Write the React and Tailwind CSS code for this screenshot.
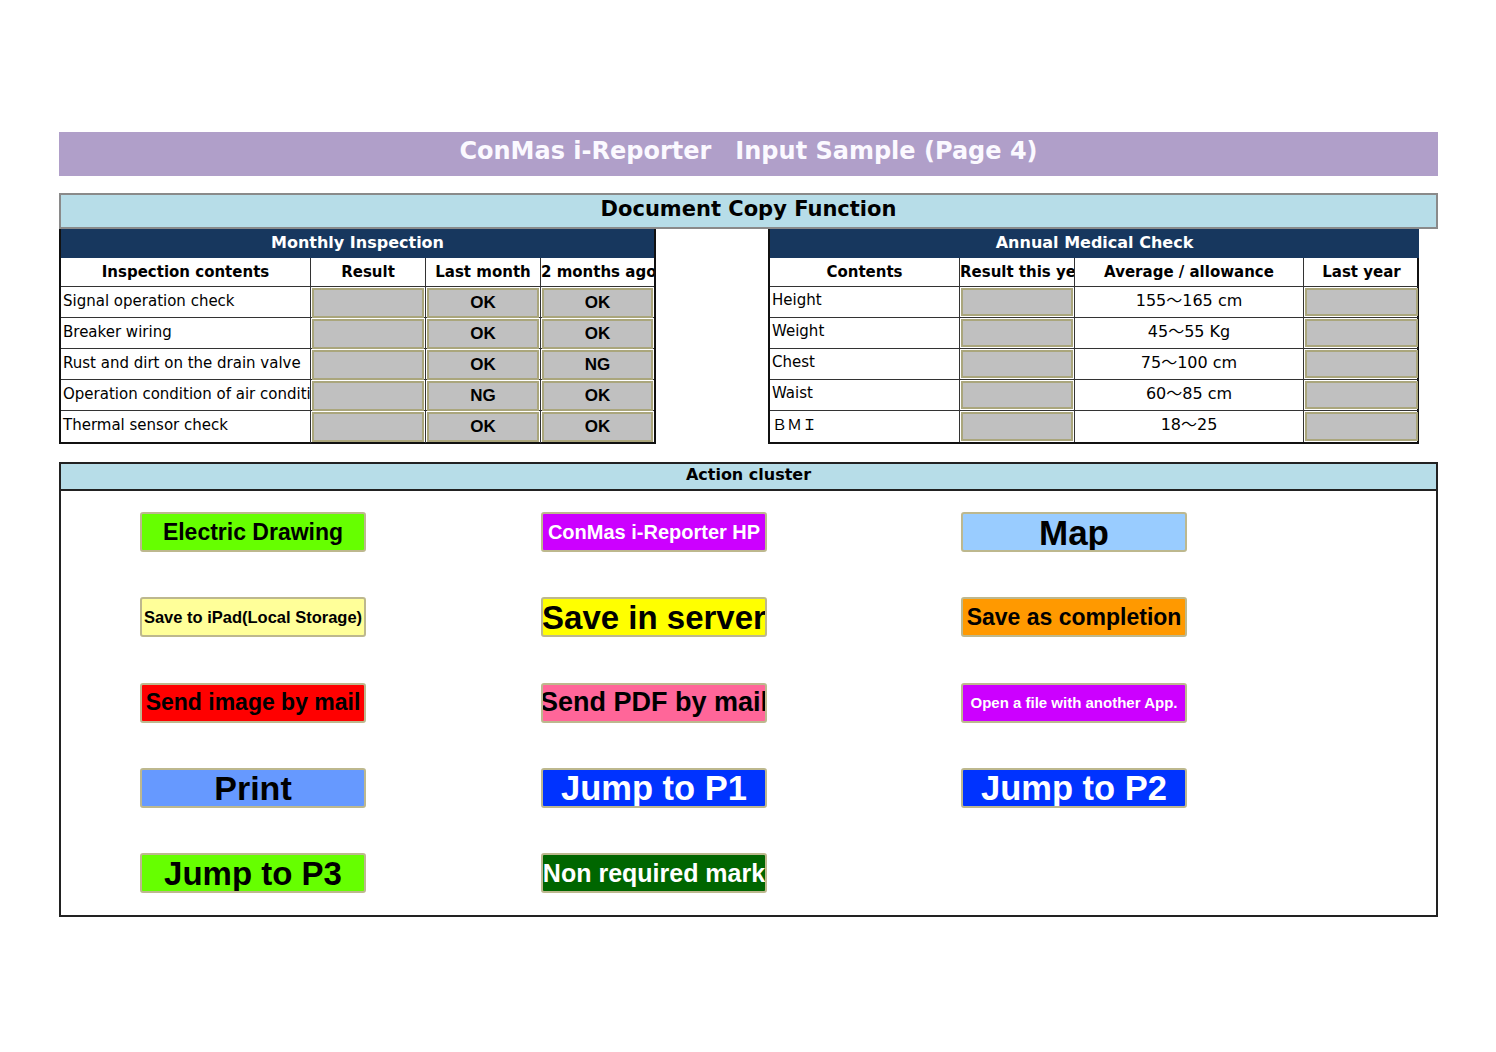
import React from 'react';

const verdana = { fontFamily: '"DejaVu Sans", Verdana, "Noto Sans CJK JP", sans-serif' };
const arial = { fontFamily: '"Liberation Sans", Arial, sans-serif' };

const monthlyRows = [
  ['Signal operation check', 'OK', 'OK'],
  ['Breaker wiring', 'OK', 'OK'],
  ['Rust and dirt on the drain valve', 'OK', 'NG'],
  ['Operation condition of air conditioner', 'NG', 'OK'],
  ['Thermal sensor check', 'OK', 'OK'],
];

const medicalRows = [
  ['Height', '155～165 cm'],
  ['Weight', '45～55 Kg'],
  ['Chest', '75～100 cm'],
  ['Waist', '60～85 cm'],
  ['ＢＭＩ', '18～25'],
];

// buttons in reading order, three per row
const actions = [
  { label: 'Electric Drawing', cls: 'bg-[#66ff00] text-black text-[23px]' },
  { label: 'ConMas i-Reporter HP', cls: 'bg-[#cc00ff] text-white text-[20px]' },
  { label: 'Map', cls: 'bg-[#99ccff] text-black text-[35px]' },
  { label: 'Save to iPad(Local Storage)', cls: 'bg-[#ffff99] text-black text-[16.5px]' },
  { label: 'Save in server', cls: 'bg-[#ffff00] text-black text-[33px]' },
  { label: 'Save as completion', cls: 'bg-[#ff9900] text-black text-[23px]' },
  { label: 'Send image by mail', cls: 'bg-[#ff0000] text-black text-[23px]' },
  { label: 'Send PDF by mail', cls: 'bg-[#ff6699] text-black text-[27px]' },
  { label: 'Open a file with another App.', cls: 'bg-[#cc00ff] text-white text-[15px]' },
  { label: 'Print', cls: 'bg-[#6699ff] text-black text-[34px]' },
  { label: 'Jump to P1', cls: 'bg-[#0033ff] text-white text-[34.5px]' },
  { label: 'Jump to P2', cls: 'bg-[#0033ff] text-white text-[34.5px]' },
  { label: 'Jump to P3', cls: 'bg-[#66ff00] text-black text-[33px]' },
  { label: 'Non required mark', cls: 'bg-[#006600] text-white text-[25px]' },
];

function GrayCell({ text }) {
  return (
    <div className="h-full border-r border-[#333] flex">
      <div className="flex-1 m-px border-2 border-[#aaa67c] bg-[#c0c0c0] flex items-center justify-center font-bold text-[17px] text-black" style={arial}>
        {text}
      </div>
    </div>
  );
}

function HeadCell({ children, last, left }) {
  return (
    <div className={`h-full overflow-hidden whitespace-nowrap flex items-center font-bold text-[15px] ${left ? 'justify-start' : 'justify-center'} ${last ? '' : 'border-r border-[#333]'}`}>
      {children}
    </div>
  );
}

function MonthlyTable() {
  return (
    <div className="w-[597px] border-2 border-[#111] border-t-0" style={verdana}>
      <div className="h-[29px] bg-[#17375e] text-white font-bold text-[16px] flex items-center justify-center pb-[2px]">Monthly Inspection</div>
      <div className="grid grid-cols-[250px_115px_115px_113px] h-[29px] border-b border-[#333] bg-white">
        <HeadCell>Inspection contents</HeadCell>
        <HeadCell>Result</HeadCell>
        <HeadCell>Last month</HeadCell>
        <HeadCell last left>2 months ago</HeadCell>
      </div>
      {monthlyRows.map((r, i) => (
        <div key={i} className={`grid grid-cols-[250px_115px_115px_113px] h-[31px] ${i < 4 ? 'border-b border-[#333]' : ''}`}>
          <div className="h-full border-r border-[#333] overflow-hidden whitespace-nowrap pl-[2px] pb-[3px] flex items-center text-[15px]">{r[0]}</div>
          <GrayCell />
          <GrayCell text={r[1]} />
          <div className="h-full flex">
            <div className="flex-1 m-px border-2 border-[#aaa67c] bg-[#c0c0c0] flex items-center justify-center font-bold text-[17px]" style={arial}>{r[2]}</div>
          </div>
        </div>
      ))}
    </div>
  );
}

function MedicalTable() {
  return (
    <div className="w-[651px] border-2 border-[#111] border-t-0 border-r-0" style={verdana}>
      <div className="h-[29px] bg-[#17375e] text-white font-bold text-[16px] flex items-center justify-center pb-[2px]">Annual Medical Check</div>
      <div className="grid grid-cols-[190px_115px_229px_115px] h-[29px] border-b border-[#333] border-r-2 border-r-[#111] bg-white">
        <HeadCell>Contents</HeadCell>
        <HeadCell left>Result this year</HeadCell>
        <HeadCell>Average / allowance</HeadCell>
        <HeadCell last>Last year</HeadCell>
      </div>
      {medicalRows.map((r, i) => (
        <div key={i} className={`grid grid-cols-[190px_115px_229px_115px] h-[31px] border-r-2 border-r-[#111] ${i < 4 ? 'border-b border-[#333]' : ''}`}>
          <div className="h-full border-r border-[#333] pl-[2px] pb-[3px] flex items-center text-[15px]">{r[0]}</div>
          <GrayCell />
          <div className="h-full border-r border-[#333] pb-[3px] flex items-center justify-center text-[16px]">{r[1]}</div>
          <div className="h-full flex">
            <div className="flex-1 m-px border-2 border-[#aaa67c] bg-[#c0c0c0]" />
          </div>
        </div>
      ))}
    </div>
  );
}

export default function App() {
  return (
    <div className="min-h-screen bg-white pt-[132px] pl-[59px]">
      <div className="w-[1379px]">
        <div className="h-[44px] bg-[#b09fc9] flex items-center justify-center pb-[6px] text-[#fbf9ff] font-bold text-[24px]" style={verdana}>
          ConMas i-Reporter　Input Sample (Page 4)
        </div>

        <div className="mt-[17px] h-[36px] bg-[#b7dde8] border-2 border-[#8a8a8a] flex items-center justify-center pb-[2px] font-bold text-[21px] text-black" style={verdana}>
          Document Copy Function
        </div>

        <div className="flex">
          <MonthlyTable />
          <div className="w-[112px]" />
          <MedicalTable />
        </div>

        <div className="mt-[18px] border-2 border-[#222]">
          <div className="h-[27px] bg-[#b7dde8] border-b-2 border-[#222] flex items-center justify-center pb-[3px] font-bold text-[16px]" style={verdana}>
            Action cluster
          </div>
          <div className="grid grid-cols-[401px_420px_226px] gap-y-[45.3px] pl-[79px] pt-[21px] pb-[22px]">
            {actions.map((a) => (
              <div
                key={a.label}
                className={`w-[226px] h-[40px] border-2 border-[#bdb88e] rounded-[3px] flex items-center justify-center font-bold whitespace-nowrap overflow-hidden leading-none ${a.cls}`}
                style={arial}
              >
                {a.label}
              </div>
            ))}
          </div>
        </div>
      </div>
    </div>
  );
}
